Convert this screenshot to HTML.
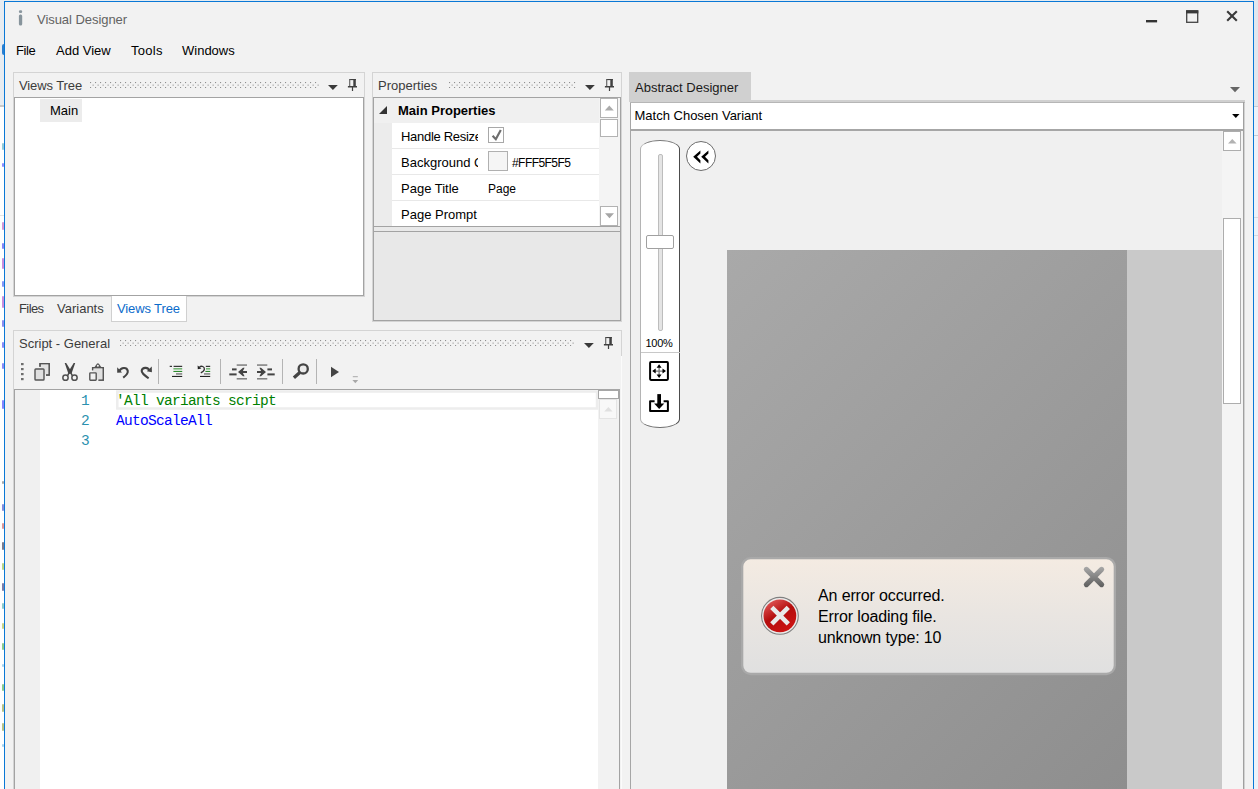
<!DOCTYPE html>
<html><head><meta charset="utf-8"><title>Visual Designer</title>
<style>
html,body{margin:0;padding:0;}
body{width:1258px;height:789px;overflow:hidden;position:relative;background:#e6ecf1;font-family:"Liberation Sans",sans-serif;font-size:13px;color:#000;}
div,span,svg{position:absolute;box-sizing:border-box;}
.t{white-space:nowrap;line-height:16px;font-size:13px;}
#win{left:4px;top:1px;width:1250px;height:800px;background:#f2f2f2;border:1px solid #0a78d6;}
/* everything inside #root uses page coordinates */
#root{left:0;top:0;width:1258px;height:789px;overflow:hidden;}
.panel{background:#f2f2f2;border:1px solid #d4d4d4;}
.dk{border:1px solid #a3a3a3;}
.grip{height:7px;background-image:
  linear-gradient(45deg,#c9c9c9 25%,transparent 25%,transparent 75%,#c9c9c9 75%),
  linear-gradient(45deg,#c9c9c9 25%,transparent 25%,transparent 75%,#c9c9c9 75%);
  background-size:4px 4px;background-position:0 0,2px 2px;}
.sbtn{background:#fff;border:1px solid #b2b2b2;}
.mono{font-family:"Liberation Mono",monospace;font-size:14.5px;letter-spacing:-0.7px;}
</style></head>
<body>
<div id="bgleft" style="left:0;top:0;width:4px;height:789px;background:#fff;"></div>
<div style="left:0;top:0;width:4px;height:105px;background:#e7ecf1;"></div>
<div style="left:0;top:105px;width:4px;height:2px;background:#c9c9c9;"></div>
<div style="left:2px;top:44px;width:2px;height:11px;background:#2b7fd0;border-radius:2px 0 0 2px;"></div>
<svg style="left:0;top:0;" width="4" height="789" viewBox="0 0 4 789"><rect x="2" y="143" width="2" height="7" rx="1" fill="#3aa0b8" opacity="0.55"/><rect x="2" y="163" width="2" height="4" rx="1" fill="#3030ff" opacity="0.55"/><rect x="2" y="222" width="2" height="8" rx="1" fill="#b040b0" opacity="0.55"/><rect x="2" y="243" width="2" height="6" rx="1" fill="#2020f0" opacity="0.55"/><rect x="2" y="258" width="2" height="11" rx="1" fill="#a030c0" opacity="0.55"/><rect x="2" y="281" width="2" height="6" rx="1" fill="#2040f0" opacity="0.55"/><rect x="2" y="296" width="2" height="12" rx="1" fill="#a030c0" opacity="0.55"/><rect x="2" y="320" width="2" height="7" rx="1" fill="#3030e0" opacity="0.55"/><rect x="2" y="342" width="2" height="6" rx="1" fill="#2a2af0" opacity="0.55"/><rect x="2" y="363" width="2" height="6" rx="1" fill="#2a2af0" opacity="0.55"/><rect x="2" y="400" width="2" height="9" rx="1" fill="#2020ff" opacity="0.55"/><rect x="2" y="481" width="2" height="3" rx="1" fill="#606060" opacity="0.55"/><rect x="2" y="504" width="2" height="7" rx="1" fill="#2030c0" opacity="0.55"/><rect x="2" y="523" width="2" height="6" rx="1" fill="#c04040" opacity="0.55"/><rect x="2" y="542" width="2" height="8" rx="1" fill="#101030" opacity="0.55"/><rect x="2" y="563" width="2" height="7" rx="1" fill="#80b020" opacity="0.55"/><rect x="2" y="583" width="2" height="8" rx="1" fill="#101060" opacity="0.55"/><rect x="2" y="603" width="2" height="6" rx="1" fill="#30a0a0" opacity="0.55"/><rect x="2" y="623" width="2" height="6" rx="1" fill="#a0b020" opacity="0.55"/><rect x="2" y="643" width="2" height="7" rx="1" fill="#30a030" opacity="0.55"/><rect x="2" y="664" width="2" height="3" rx="1" fill="#60b0e0" opacity="0.55"/><rect x="2" y="684" width="2" height="7" rx="1" fill="#30a030" opacity="0.55"/><rect x="2" y="704" width="2" height="8" rx="1" fill="#809020" opacity="0.55"/><rect x="2" y="723" width="2" height="8" rx="1" fill="#809020" opacity="0.55"/><rect x="2" y="744" width="2" height="3" rx="1" fill="#60b0e0" opacity="0.55"/><rect x="0" y="215" width="4" height="1" fill="#e4e4e4"/></svg>
<div id="win"></div>
<div id="root">

<svg style="left:0;top:0;" width="0" height="0"><defs><pattern id="gp" x="0" y="0" width="5" height="5" patternUnits="userSpaceOnUse"><rect x="0" y="0" width="1.1" height="1.1" fill="#909090"/><rect x="2.45" y="2.45" width="1.4" height="1.4" fill="#b8b8b8"/></pattern></defs></svg>
<!-- title bar -->
<svg style="left:16px;top:8px;" width="10" height="20" viewBox="16 8 10 20"><rect x="18.9" y="10.2" width="3.3" height="2.8" rx="1.3" fill="#8a979f"/><rect x="18.9" y="14.4" width="3.3" height="11" rx="1.5" fill="#87949c"/></svg>
<div class="t" style="left:37px;top:12px;color:#636363;letter-spacing:-0.05px;">Visual Designer</div>
<svg style="left:1140px;top:5px;" width="110" height="24" viewBox="1140 5 110 24">
  <rect x="1146" y="20" width="11.1" height="2.4" fill="#333"/>
  <rect x="1186.7" y="11" width="11" height="11.3" fill="none" stroke="#444" stroke-width="1.3"/>
  <rect x="1186.1" y="10.2" width="12.2" height="3.2" fill="#3a3a3a"/>
  <path d="M1227.2 11.2 L1236.8 20.8 M1236.8 11.2 L1227.2 20.8" stroke="#3a3a3a" stroke-width="2.1" fill="none"/>
</svg>

<!-- menu -->
<div class="t" style="left:16px;top:43px;letter-spacing:-0.4px;">File</div>
<div class="t" style="left:56px;top:43px;">Add View</div>
<div class="t" style="left:131px;top:43px;letter-spacing:0.3px;">Tools</div>
<div class="t" style="left:182px;top:43px;">Windows</div>

<!-- Views Tree panel -->
<div class="panel" style="left:13px;top:72px;width:352px;height:225px;"></div>
<div class="t" style="left:19px;top:78px;color:#3c3c3c;letter-spacing:-0.1px;">Views Tree</div>
<svg style="left:90px;top:82px;" width="229" height="6" viewBox="0 0 229 6"><rect width="229" height="6" fill="url(#gp)"/></svg>
<svg style="left:326px;top:76px;" width="36" height="18" viewBox="326 76 36 18">
  <path d="M328 85 H337.8 L332.9 90 Z" fill="#3a3a3a"/>
  <rect x="349.1" y="79" width="6.7" height="1.1" fill="#404040"/>
  <rect x="349.1" y="79" width="1.2" height="7.4" fill="#686868"/>
  <rect x="353.3" y="79" width="2.5" height="7.4" fill="#404040"/>
  <rect x="347.9" y="86" width="9.1" height="1.5" fill="#404040"/>
  <rect x="351.9" y="87" width="1.2" height="4" fill="#404040"/>
</svg>
<div class="dk" style="left:14px;top:97px;width:350px;height:199px;background:#fff;"></div>
<div style="left:40px;top:99px;width:42px;height:23px;background:#ececec;"></div>
<div class="t" style="left:50px;top:103px;">Main</div>
<!-- tabs -->
<div class="t" style="left:19px;top:301px;color:#3c3c3c;letter-spacing:-0.6px;">Files</div>
<div class="t" style="left:57px;top:301px;color:#3c3c3c;">Variants</div>
<div style="left:111px;top:296px;width:76px;height:26px;background:#fff;border:1px solid #d0d0d0;border-top:none;"></div>
<div class="t" style="left:117px;top:301px;color:#0b6bcb;letter-spacing:-0.12px;">Views Tree</div>

<!-- Properties panel -->
<div class="panel" style="left:372px;top:72px;width:250px;height:250px;"></div>
<div class="t" style="left:378px;top:78px;color:#3c3c3c;">Properties</div>
<svg style="left:449px;top:82px;" width="127" height="6" viewBox="0 0 127 6"><rect width="127" height="6" fill="url(#gp)"/></svg>
<svg style="left:583px;top:76px;" width="36" height="18" viewBox="326 76 36 18">
  <path d="M328 85 H337.8 L332.9 90 Z" fill="#3a3a3a"/>
  <rect x="349.1" y="79" width="6.7" height="1.1" fill="#404040"/>
  <rect x="349.1" y="79" width="1.2" height="7.4" fill="#686868"/>
  <rect x="353.3" y="79" width="2.5" height="7.4" fill="#404040"/>
  <rect x="347.9" y="86" width="9.1" height="1.5" fill="#404040"/>
  <rect x="351.9" y="87" width="1.2" height="4" fill="#404040"/>
</svg>
<div class="dk" style="left:373px;top:97px;width:248px;height:130px;background:#fff;"></div>
<div style="left:374px;top:98px;width:225px;height:25px;background:#f0f0f0;"></div>
<div style="left:374px;top:123px;width:18px;height:103px;background:#ececec;"></div>
<div style="left:599px;top:98px;width:21px;height:128px;background:#f4f4f4;"></div>
<svg style="left:378px;top:105px;" width="10" height="10" viewBox="0 0 10 10"><path d="M9 1 V9 H1 Z" fill="#333"/></svg>
<div class="t" style="left:398px;top:103px;font-weight:bold;">Main Properties</div>
<div style="left:392px;top:148px;width:207px;height:1px;background:#e8e8e8;"></div>
<div style="left:392px;top:174px;width:207px;height:1px;background:#e8e8e8;"></div>
<div style="left:392px;top:200px;width:207px;height:1px;background:#e8e8e8;"></div>
<div style="left:392px;top:123px;width:86px;height:103px;overflow:hidden;">
  <div class="t" style="left:9px;top:6px;letter-spacing:-0.3px;">Handle Resize</div>
  <div class="t" style="left:9px;top:32px;">Background Color</div>
  <div class="t" style="left:9px;top:58px;">Page Title</div>
  <div class="t" style="left:9px;top:84px;">Page Prompt</div>
</div>
<div style="left:488px;top:127px;width:16px;height:16px;background:#fff;border:1px solid #a8a8a8;"></div>
<svg style="left:488px;top:127px;" width="16" height="16" viewBox="0 0 16 16"><path d="M4.6 8.8 L7.8 12.2 L12.8 2.9" stroke="#6e6e6e" stroke-width="2.2" fill="none"/></svg>
<div style="left:488px;top:151px;width:20px;height:20px;background:#f5f5f5;border:1px solid #b0b0b0;"></div>
<div class="t" style="left:512px;top:155px;font-size:12px;letter-spacing:-0.55px;">#FFF5F5F5</div>
<div class="t" style="left:488px;top:181px;font-size:12px;">Page</div>
<div class="sbtn" style="left:600px;top:98px;width:18px;height:20px;"></div>
<div class="sbtn" style="left:600px;top:119px;width:18px;height:18px;"></div>
<div class="sbtn" style="left:600px;top:206px;width:18px;height:20px;"></div>
<svg style="left:600px;top:99px;" width="18" height="127" viewBox="0 0 18 127">
  <path d="M4.8 11.4 H13.8 L9.3 6.6 Z" fill="#ababab"/>
  <path d="M5 114.2 H14 L9.5 119.2 Z" fill="#a6a6a6"/>
</svg>
<div class="dk" style="left:373px;top:231px;width:248px;height:90px;background:#e8e8e8;"></div>
<div style="left:374px;top:227px;width:246px;height:4px;background:#e9e9e9;"></div>
<div style="left:373px;top:227px;width:1px;height:4px;background:#a3a3a3;"></div>
<div style="left:620px;top:227px;width:1px;height:4px;background:#a3a3a3;"></div>

<!-- Script panel -->
<div class="panel" style="left:13px;top:330px;width:609px;height:470px;"></div>
<div class="t" style="left:19px;top:336px;color:#3c3c3c;">Script - General</div>
<svg style="left:120px;top:340px;" width="455" height="6" viewBox="0 0 455 6"><rect width="455" height="6" fill="url(#gp)"/></svg>
<svg style="left:582px;top:334px;" width="36" height="18" viewBox="326 76 36 18">
  <path d="M328 85 H337.8 L332.9 90 Z" fill="#3a3a3a"/>
  <rect x="349.1" y="79" width="6.7" height="1.1" fill="#404040"/>
  <rect x="349.1" y="79" width="1.2" height="7.4" fill="#686868"/>
  <rect x="353.3" y="79" width="2.5" height="7.4" fill="#404040"/>
  <rect x="347.9" y="86" width="9.1" height="1.5" fill="#404040"/>
  <rect x="351.9" y="87" width="1.2" height="4" fill="#404040"/>
</svg>
<!-- toolbar icons -->
<svg id="tb" style="left:14px;top:356px;" width="360" height="33" viewBox="14 356 360 33">
  <g fill="#6e6e6e"><rect x="21" y="363" width="2.6" height="2.2"/><rect x="21" y="368" width="2.6" height="2.2"/><rect x="21" y="373" width="2.6" height="2.2"/><rect x="21" y="378" width="2.6" height="2.2"/></g>
  <!-- copy -->
  <path d="M40 366.8 V363.7 H49.2 V375 H46" fill="#e3e3e3" stroke="#555" stroke-width="1.3"/>
  <rect x="41" y="364.5" width="7.5" height="10" fill="#e3e3e3"/>
  <path d="M40 366.8 V363.7 H49.2 V375 H46" fill="none" stroke="#555" stroke-width="1.3"/>
  <rect x="35" y="369" width="9" height="11" rx="0.8" fill="#e0e0e0" stroke="#555" stroke-width="1.4"/>
  <!-- cut -->
  <path d="M64.7 363 L66.2 363 L71.7 372.1 L69.95 374 L67.9 372.2 Z" fill="#444"/>
  <path d="M75.2 363 L73.7 363 L68.2 372.1 L69.95 374 L72 372.2 Z" fill="#444"/>
  <path d="M69.3 372.4 L67.6 375.6 M70.6 372.4 L72.3 375.6" stroke="#4a4a4a" stroke-width="1.5" fill="none"/>
  <circle cx="65.5" cy="377.7" r="2.65" fill="none" stroke="#505050" stroke-width="1.5"/>
  <circle cx="74.5" cy="377.7" r="2.65" fill="none" stroke="#505050" stroke-width="1.5"/>
  <!-- paste -->
  <path d="M92.6 370.3 V367.7 H103.3 V380.2 H98.5" fill="#e0e0e0" stroke="#555" stroke-width="1.3"/>
  <rect x="93.3" y="368.4" width="9.3" height="11.2" fill="#e0e0e0"/>
  <path d="M92.6 370.3 V367.7 H103.3 V380.2 H98.5" fill="none" stroke="#555" stroke-width="1.3"/>
  <path d="M94.2 367.4 L96.7 364 Q97.9 362.4 99.1 364 L101.6 367.4 Z" fill="#555"/><circle cx="97.9" cy="365.8" r="1" fill="#f4f4f4"/>
  <rect x="89.8" y="372.9" width="6.4" height="7.3" rx="0.6" fill="#f0f0f0" stroke="#555" stroke-width="1.4"/>
  <!-- undo -->
  <path d="M119.5 370.8 C121 367.6 126.6 366.6 127.7 370.6 C128.4 373.3 126 375.5 123.2 377.6" fill="none" stroke="#444" stroke-width="2.1"/>
  <path d="M117.2 367.3 L117.2 372.8 L122 372.4 Z" fill="#444"/>
  <!-- redo -->
  <path d="M149.3 370.8 C148.5 367.2 142.6 366.6 141.7 370.6 C141.2 373 144 375 148.6 378.3" fill="none" stroke="#444" stroke-width="2.1"/>
  <path d="M151.8 366.6 L151.9 372.2 L146.8 371.2 Z" fill="#444"/>
  <rect x="158" y="359" width="1" height="25" fill="#b4b4b4"/>
  <!-- comment -->
  <g>
   <rect x="169.7" y="365.8" width="2.3" height="1.1" fill="#222"/>
   <rect x="173.6" y="365.8" width="8.6" height="1.1" fill="#222"/>
   <rect x="173.4" y="368.3" width="8.8" height="1.1" fill="#3f9a3f"/>
   <rect x="173.4" y="370.9" width="8.8" height="1.1" fill="#2c8a2c"/>
   <rect x="176" y="373.4" width="6.2" height="1.1" fill="#555"/>
   <rect x="172" y="375.9" width="10.2" height="1.1" fill="#222"/>
  </g>
  <!-- uncomment -->
  <g>
   <rect x="205.8" y="365.8" width="4.4" height="1.1" fill="#222"/>
   <rect x="206" y="368.3" width="4.2" height="1.1" fill="#3f9a3f"/>
   <rect x="205.4" y="370.9" width="4.8" height="1.1" fill="#2c8a2c"/>
   <rect x="204" y="373.4" width="6.2" height="1.1" fill="#555"/>
   <rect x="200" y="375.9" width="10.2" height="1.1" fill="#222"/>
   <path d="M199.5 367 C201.5 365.4 204.6 366.6 204.4 369.2 C204.2 370.8 202.6 372 200.8 372.8" fill="none" stroke="#333" stroke-width="1.3"/>
   <path d="M197.6 365.6 L197.8 369.3 L201.4 368.6 Z" fill="#222"/>
  </g>
  <rect x="220" y="359" width="1" height="25" fill="#b4b4b4"/>
  <!-- outdent -->
  <g fill="#444">
   <rect x="236.7" y="364.5" width="10.3" height="1.1" fill="#555"/>
   <rect x="236.7" y="378.3" width="10.3" height="1.1" fill="#555"/>
   <rect x="232" y="368.4" width="4.6" height="2"/>
   <rect x="229.3" y="373.4" width="7.3" height="2"/>
   <rect x="241" y="371" width="6" height="2"/>
   <path d="M238 372 L243 367.8 L244.6 367.8 L242.4 372 L244.6 376.2 L243 376.2 Z"/>
  </g>
  <!-- indent -->
  <g fill="#444">
   <rect x="257" y="364.5" width="10.3" height="1.1" fill="#555"/>
   <rect x="257" y="378.3" width="10.3" height="1.1" fill="#555"/>
   <rect x="267.4" y="368.4" width="4.6" height="2"/>
   <rect x="267.4" y="373.4" width="7.3" height="2"/>
   <rect x="257" y="371" width="6" height="2"/>
   <path d="M266 372 L261 367.8 L259.4 367.8 L261.6 372 L259.4 376.2 L261 376.2 Z"/>
  </g>
  <rect x="282" y="359" width="1" height="25" fill="#b4b4b4"/>
  <!-- find -->
  <circle cx="303.2" cy="368.9" r="4.6" fill="#ebebeb" stroke="#444" stroke-width="2.3"/>
  <path d="M299.8 372.6 L293.9 377.8" stroke="#444" stroke-width="3.3" fill="none"/>
  <rect x="316" y="359" width="1" height="25" fill="#b4b4b4"/>
  <!-- play -->
  <path d="M331 366.8 L339 372 L331 377.2 Z" fill="#444"/>
  <!-- overflow -->
  <rect x="352.8" y="376.2" width="5" height="1" fill="#a8a8a8"/>
  <path d="M352.4 380 H358.2 L355.3 383.2 Z" fill="#a8a8a8"/>
</svg>
<!-- editor -->
<div class="dk" style="left:14px;top:389px;width:606px;height:420px;background:#fff;"></div>
<div style="left:15px;top:390px;width:25px;height:400px;background:#f0f0f0;"></div>
<div style="left:598px;top:390px;width:21px;height:400px;background:#f2f2f2;"></div>
<svg style="left:114px;top:388px;" width="486" height="24" viewBox="114 388 486 24"><rect x="117.3" y="391.5" width="479.7" height="17" fill="#fff" stroke="#ededed" stroke-width="2.5"/></svg>
<div class="t mono" style="left:81px;top:393px;color:#2b91af;">1</div>
<div class="t mono" style="left:81px;top:413px;color:#2b91af;">2</div>
<div class="t mono" style="left:81px;top:433px;color:#2b91af;">3</div>
<div class="t mono" style="left:116px;top:393px;color:#008000;">'All variants script</div>
<div class="t mono" style="left:116px;top:413px;color:#0000ff;">AutoScaleAll</div>
<div style="left:598px;top:389px;width:22px;height:10px;background:#fff;border:1px solid #a6a6a6;border-top-width:2px;border-right-width:2px;"></div>
<div style="left:599px;top:399px;width:18px;height:20px;background:#f8f8f8;border:1px solid #e4e4e4;"></div>
<svg style="left:599px;top:399px;" width="18" height="20" viewBox="0 0 18 20"><path d="M5.2 12.6 H13.6 L9.4 8 Z" fill="#e0e0e0"/></svg>

<!-- Abstract Designer -->
<div style="left:629px;top:72px;width:122px;height:28px;background:#d0d0d0;"></div>
<div class="t" style="left:635px;top:80px;color:#1a1a1a;">Abstract Designer</div>
<svg style="left:1228px;top:84px;" width="14" height="10" viewBox="0 0 14 10"><path d="M2 3 H12 L7 8.2 Z" fill="#666"/></svg>
<div style="left:630px;top:102px;width:615px;height:700px;background:#f0f0f0;border-left:1px solid #a6a6a6;border-right:2px solid #d2d2d2;"></div>
<div style="left:629px;top:100px;width:616px;height:2px;background:#d0d0d0;"></div>
<div style="left:630px;top:102px;width:615px;height:1px;background:#b6b6b6;"></div>
<div style="left:1243px;top:102px;width:1px;height:700px;background:#a0a0a0;"></div>
<div style="left:631px;top:103px;width:612px;height:26px;background:#fff;"></div>
<div style="left:631px;top:129px;width:612px;height:2px;background:#a6a6a6;"></div>
<div class="t" style="left:634.5px;top:108px;color:#000;">Match Chosen Variant</div>
<svg style="left:1230px;top:112px;" width="12" height="8" viewBox="0 0 12 8"><path d="M2.1 2 H9.5 L5.8 6 Z" fill="#000"/></svg>

<!-- canvas -->
<div style="left:727px;top:250px;width:400px;height:540px;background:linear-gradient(135deg,#a9a9a9 0%,#8e8e8e 100%);"></div>
<div style="left:1127px;top:250px;width:95px;height:540px;background:#c9c9c9;"></div>
<!-- v scrollbar -->
<div style="left:1222px;top:131px;width:21px;height:660px;background:#f4f4f4;"></div>
<div class="sbtn" style="left:1223px;top:131px;width:18px;height:20px;border-color:#adadad;"></div>
<svg style="left:1223px;top:131px;" width="18" height="20" viewBox="0 0 18 20"><path d="M5 12.6 H13.6 L9.3 8 Z" fill="#b2b2b2"/></svg>
<div class="sbtn" style="left:1223px;top:218px;width:18px;height:186px;border-color:#adadad;"></div>

<!-- zoom slider -->
<div style="left:640px;top:140px;width:40px;height:288px;background:#fff;border:1px solid;border-color:#7a7a7a #4c4c4c #707070 #b4b4b4;border-radius:20px / 9px;"></div>
<div style="left:658px;top:154px;width:5px;height:177px;background:#e4e4e4;border:1px solid #bdbdbd;border-radius:2px;"></div>
<div style="left:646px;top:235px;width:28px;height:14px;background:#fff;border:1px solid #a0a0a0;border-radius:2px;"></div>
<div class="t" style="left:645.5px;top:335px;font-size:11px;letter-spacing:-0.3px;">100%</div>
<div style="left:641px;top:352px;width:39px;height:1px;background:#c8c8c8;"></div>
<svg id="zi" style="left:646px;top:358px;" width="28" height="60" viewBox="646 358 28 60">
  <rect x="650.1" y="362.1" width="17.8" height="17.8" rx="0.8" fill="#fff" stroke="#000" stroke-width="2"/>
  <path d="M659.1 366.5 V375.5 M654.5 371.1 H663.8" stroke="#7a7a7a" stroke-width="1.3" fill="none"/>
  <path d="M659.1 364.2 L661.6 367.7 H656.6 Z M659.1 377.9 L661.6 374.4 H656.6 Z M652.2 371.1 L655.7 368.6 V373.6 Z M666 371.1 L662.5 368.6 V373.6 Z" fill="#000"/>
  <path d="M654.6 401.2 H650.1 V410.9 H667.9 V401.2 H663.6" fill="none" stroke="#000" stroke-width="2" stroke-linejoin="round"/>
  <rect x="657.3" y="394.1" width="3.7" height="10" fill="#000"/>
  <path d="M654.1 403.5 H664.3 L659.2 409.1 Z" fill="#000"/>
</svg>
<!-- collapse button -->
<div style="left:686px;top:141px;width:30px;height:30px;border-radius:15px;background:#fff;border:1px solid #6c6c6c;"></div>
<svg style="left:686px;top:141px;" width="30" height="30" viewBox="0 0 30 30"><path d="M7.2 15.7 L14.4 9.4 V12.6 L11 15.7 L14.4 19.2 V22.6 Z M15.2 15.7 L22.4 9.4 V12.6 L19 15.7 L22.4 19.2 V22.6 Z" fill="#000"/></svg>

<!-- error popup -->
<svg style="left:738px;top:554px;" width="382" height="125" viewBox="738 554 382 125">
  <defs><linearGradient id="pg" x1="0" y1="0" x2="0" y2="1"><stop offset="0" stop-color="#f4ebe2"/><stop offset="0.5" stop-color="#e9e5e1"/><stop offset="1" stop-color="#e0e0e0"/></linearGradient></defs>
  <rect x="742.15" y="558.1" width="372.7" height="115.9" rx="8.5" fill="url(#pg)" stroke="#a9a9a9" stroke-width="2.3"/>
</svg>
<svg id="err" style="left:758px;top:594px;" width="44" height="44" viewBox="758 594 44 44">
  <defs>
   <linearGradient id="rg" x1="0.2" y1="0" x2="0.8" y2="1"><stop offset="0" stop-color="#e25a5a"/><stop offset="0.45" stop-color="#b40d0d"/><stop offset="1" stop-color="#d01414"/></linearGradient>
   <linearGradient id="xg" x1="0" y1="0" x2="0" y2="1"><stop offset="0" stop-color="#f4f4f4"/><stop offset="1" stop-color="#d2d2d2"/></linearGradient>
  </defs>
  <circle cx="779.9" cy="615.8" r="18.4" fill="#ecebea" stroke="#808080" stroke-width="1.1"/>
  <circle cx="779.9" cy="615.8" r="16.4" fill="url(#rg)"/>
  <path d="M771.8 607.3 L788.3 623.8 M788.3 607.3 L771.8 623.8" stroke="#e9e9e9" stroke-width="4.6" fill="none" stroke-linecap="butt"/>
</svg>
<svg id="ecl" style="left:1082px;top:565px;" width="24" height="24" viewBox="1082 565 24 24">
  <defs><linearGradient id="cg" gradientUnits="userSpaceOnUse" x1="1094" y1="567" x2="1094" y2="587"><stop offset="0" stop-color="#a8a8a8"/><stop offset="1" stop-color="#5e5e5e"/></linearGradient></defs>
  <path d="M1086.4 569.4 L1101.6 584.6 M1101.6 569.4 L1086.4 584.6" stroke="url(#cg)" stroke-width="5.2" fill="none" stroke-linecap="round"/>
</svg>
<div class="t" style="left:818px;top:586px;font-size:16px;line-height:20px;letter-spacing:-0.13px;">An error occurred.</div>
<div class="t" style="left:818px;top:607px;font-size:16px;line-height:20px;letter-spacing:-0.13px;">Error loading file.</div>
<div class="t" style="left:818px;top:628px;font-size:16px;line-height:20px;letter-spacing:-0.13px;">unknown type: 10</div>

</div>
<div id="edges">
<div style="left:4px;top:1px;width:1px;height:788px;background:#0a78d6;"></div>
<div style="left:1253px;top:1px;width:1px;height:788px;background:#0a78d6;"></div>
<div style="left:1254px;top:0;width:4px;height:789px;background:#ecf2f9;"></div>
<div style="left:1254px;top:0;width:4px;height:106px;background:#e1e7ee;"></div>
<div style="left:1254px;top:106px;width:4px;height:1px;background:#c4ccd4;"></div>
<div style="left:1254px;top:135px;width:4px;height:1px;background:#c4ccd4;"></div>
<div style="left:1254px;top:217px;width:4px;height:1px;background:#d4dae0;"></div>
<div style="left:1254px;top:235px;width:4px;height:1px;background:#d4dae0;"></div>
<div style="left:621px;top:356px;width:1px;height:434px;background:#fbfbfb;"></div>
</div>
</body></html>
